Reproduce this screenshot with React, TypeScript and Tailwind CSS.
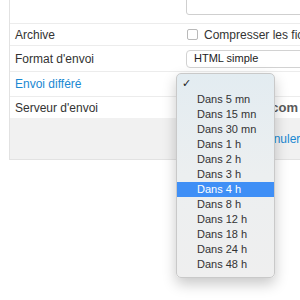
const delays = [
  'Dans 5 mn',
  'Dans 15 mn',
  'Dans 30 mn',
  'Dans 1 h',
  'Dans 2 h',
  'Dans 3 h',
  'Dans 4 h',
  'Dans 8 h',
  'Dans 12 h',
  'Dans 18 h',
  'Dans 24 h',
  'Dans 48 h',
];

function DelayMenu({ selected }: { selected: string }) {
  return (
    <div className="absolute left-[176px] top-[73px] w-[99px] rounded-[5px] border border-[#c9c9c9] bg-gradient-to-b from-[#e3ecf1] via-[#eceff0] to-[#efefef] pt-[3px] pb-[5px] shadow-[0_6px_14px_rgba(0,0,0,0.22)]">
      <div className="flex h-[15px] items-center pl-[5px] text-[11px] text-[#222] [font-family:'DejaVu_Sans',sans-serif]">
        ✓
      </div>
      {delays.map(label => (
        <div
          key={label}
          className={`flex h-[15px] items-center pl-[20px] text-[11px] ${
            label === selected ? 'bg-[#3f8ff6] text-white' : 'text-[#333]'
          }`}
        >
          {label}
        </div>
      ))}
    </div>
  );
}

export default function App() {
  return (
    <div className="relative h-[300px] w-[300px] overflow-hidden bg-white [font-family:'Liberation_Sans',Arial,sans-serif]">
      <div className="ml-[9px] w-[420px] border-l border-b border-[#e2e2e2]">
        <div className="flex h-[24px] items-end border-b border-[#ececec] pb-[8px]">
          <div className="w-[176px]" />
          <div className="h-[22px] w-[220px] rounded-[3px] border border-[#cfcfcf] bg-white" />
        </div>

        <div className="flex h-[22px] items-center border-b border-[#ececec] text-[12px] text-[#333]">
          <div className="w-[176px] pl-[5px]">Archive</div>
          <label className="flex items-center whitespace-nowrap">
            <span className="ml-[1px] h-[11px] w-[11px] rounded-[2px] border border-[#b9b9b9] bg-white" />
            <span className="ml-[6px]">Compresser les fichiers</span>
          </label>
        </div>

        <div className="flex h-[26px] items-center border-b border-[#ececec] text-[12px] text-[#333]">
          <div className="w-[176px] pl-[5px]">Format d'envoi</div>
          <div className="flex h-[18px] w-[220px] items-center rounded-[4px] border border-[#d2d2d2] bg-white pl-[7px] text-[11px] text-[#222]">
            HTML simple
          </div>
        </div>

        <div className="flex h-[25px] items-center border-b border-[#ececec] text-[12px]">
          <div className="w-[176px] pl-[5px] text-[#1a88d2]">Envoi différé</div>
        </div>

        <div className="flex h-[21px] items-center text-[12px] text-[#333]">
          <div className="w-[176px] pl-[5px]">Serveur d'envoi</div>
          <div className="flex w-[113px] justify-end overflow-hidden whitespace-nowrap pr-[1px] text-[13px] font-bold text-[#5a5a5a]">
            smtp.exemple.com
          </div>
        </div>

        <div className="flex h-[41px] items-center bg-[#f1f1f1] text-[12px]">
          <div className="w-[176px]" />
          <a className="ml-[73px] whitespace-nowrap text-[#1a88d2]">Annuler</a>
        </div>
      </div>

      <DelayMenu selected="Dans 4 h" />
    </div>
  );
}
